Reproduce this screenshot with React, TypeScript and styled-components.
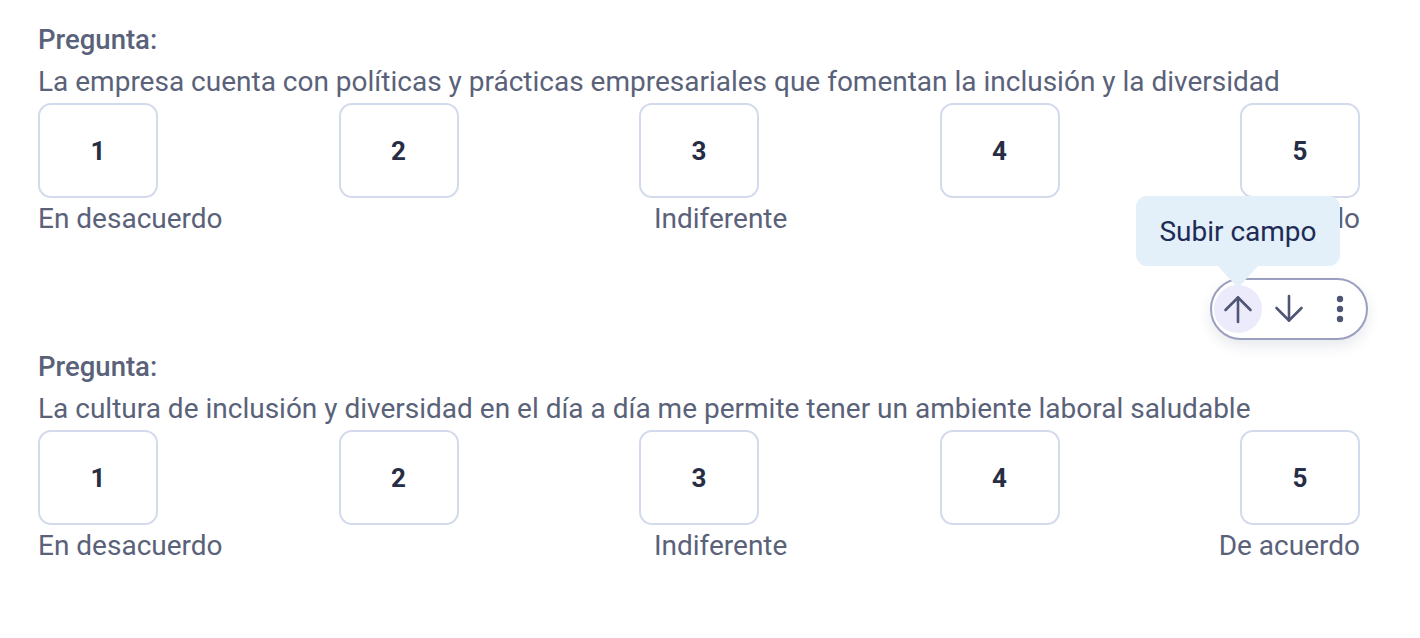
import React from "react";
import styled, { createGlobalStyle } from "styled-components";

const Global = createGlobalStyle`
  html, body { margin: 0; padding: 0; background: #ffffff; }
  body { font-family: Roboto, "Liberation Sans", Arial, sans-serif; }
`;

const Page = styled.div`
  width: 1322px;
  padding: 26px 0 0 38px;
  display: flex;
  flex-direction: column;
`;

const Section = styled.section`
  display: flex;
  flex-direction: column;
`;

const Label = styled.div`
  font-size: 27.5px;
  line-height: 28px;
  font-weight: 500;
  color: #5a6279;
`;

const Question = styled.div`
  margin-top: 12px;
  font-size: 28px;
  line-height: 32px;
  font-weight: 400;
  color: #5a6279;
`;

const Scale = styled.div`
  margin-top: 5px;
  display: flex;
  justify-content: space-between;
`;

const Option = styled.button`
  width: 120px;
  height: 95px;
  box-sizing: border-box;
  border: 2px solid #d2daec;
  border-radius: 13px;
  background: #ffffff;
  font-family: Roboto, "Liberation Sans", Arial, sans-serif;
  font-size: 26px;
  font-weight: 700;
  color: #262d44;
  padding: 0;
`;

const Legend = styled.div`
  margin-top: 5px;
  display: flex;
  justify-content: space-between;
  font-size: 28px;
  line-height: 32px;
  color: #5a6279;
`;

const ToolRow = styled.div`
  margin-top: 43px;
  margin-right: -8px;
  display: flex;
  justify-content: flex-end;
  margin-bottom: 13px;
`;

const Toolbar = styled.div`
  display: flex;
  gap: 3px;
  padding: 5px 2px;
  border: 2px solid #9a9fc0;
  border-radius: 40px;
  background: #ffffff;
  box-shadow: 0 6px 14px rgba(30, 40, 80, 0.1);
`;

const ToolButton = styled.button<{ $active?: boolean }>`
  position: relative;
  width: 48px;
  height: 48px;
  border-radius: 50%;
  border: none;
  padding: 0;
  display: flex;
  align-items: center;
  justify-content: center;
  background: ${(p) => (p.$active ? "#ebebfc" : "transparent")};
  color: #4f5673;
`;

const Tooltip = styled.div`
  position: absolute;
  left: 50%;
  bottom: calc(100% + 19px);
  transform: translateX(-50%);
  width: 204px;
  height: 70px;
  box-sizing: border-box;
  border-radius: 11px;
  background: #e3f0f9;
  color: #1d2b56;
  font-family: Roboto, "Liberation Sans", Arial, sans-serif;
  font-size: 28px;
  display: flex;
  align-items: center;
  justify-content: center;
  white-space: nowrap;
  &::after {
    content: "";
    position: absolute;
    left: 50%;
    top: 100%;
    transform: translateX(-50%);
    border-left: 20px solid transparent;
    border-right: 20px solid transparent;
    border-top: 22px solid #e3f0f9;
  }
`;

const UpIcon = () => (
  <svg width="32" height="32" viewBox="0 0 32 32" fill="none" stroke="currentColor" strokeWidth="2.6" strokeLinecap="round" strokeLinejoin="round">
    <path d="M16 4.5V29" />
    <path d="M3.5 17L16 4.5L28.5 17" />
  </svg>
);

const DownIcon = () => (
  <svg width="32" height="32" viewBox="0 0 32 32" fill="none" stroke="currentColor" strokeWidth="2.6" strokeLinecap="round" strokeLinejoin="round">
    <path d="M16 3V27.5" />
    <path d="M3.5 15L16 27.5L28.5 15" />
  </svg>
);

const DotsIcon = () => (
  <svg width="12" height="30" viewBox="0 0 12 30" fill="currentColor">
    <circle cx="6" cy="5" r="3.2" />
    <circle cx="6" cy="15" r="3.2" />
    <circle cx="6" cy="25" r="3.2" />
  </svg>
);

const QuestionBlock = ({ text }: { text: string }) => (
  <Section>
    <Label>Pregunta:</Label>
    <Question>{text}</Question>
    <Scale>
      {[1, 2, 3, 4, 5].map((n) => (
        <Option key={n}>{n}</Option>
      ))}
    </Scale>
    <Legend>
      <span>En desacuerdo</span>
      <span>Indiferente</span>
      <span>De acuerdo</span>
    </Legend>
  </Section>
);

export default function App() {
  return (
    <>
      <Global />
      <Page>
        <QuestionBlock text="La empresa cuenta con políticas y prácticas empresariales que fomentan la inclusión y la diversidad" />
        <ToolRow>
          <Toolbar>
            <ToolButton $active aria-label="Subir campo">
              <Tooltip>Subir campo</Tooltip>
              <UpIcon />
            </ToolButton>
            <ToolButton aria-label="Bajar campo">
              <DownIcon />
            </ToolButton>
            <ToolButton aria-label="Más opciones">
              <DotsIcon />
            </ToolButton>
          </Toolbar>
        </ToolRow>
        <QuestionBlock text="La cultura de inclusión y diversidad en el día a día me permite tener un ambiente laboral saludable" />
      </Page>
    </>
  );
}
